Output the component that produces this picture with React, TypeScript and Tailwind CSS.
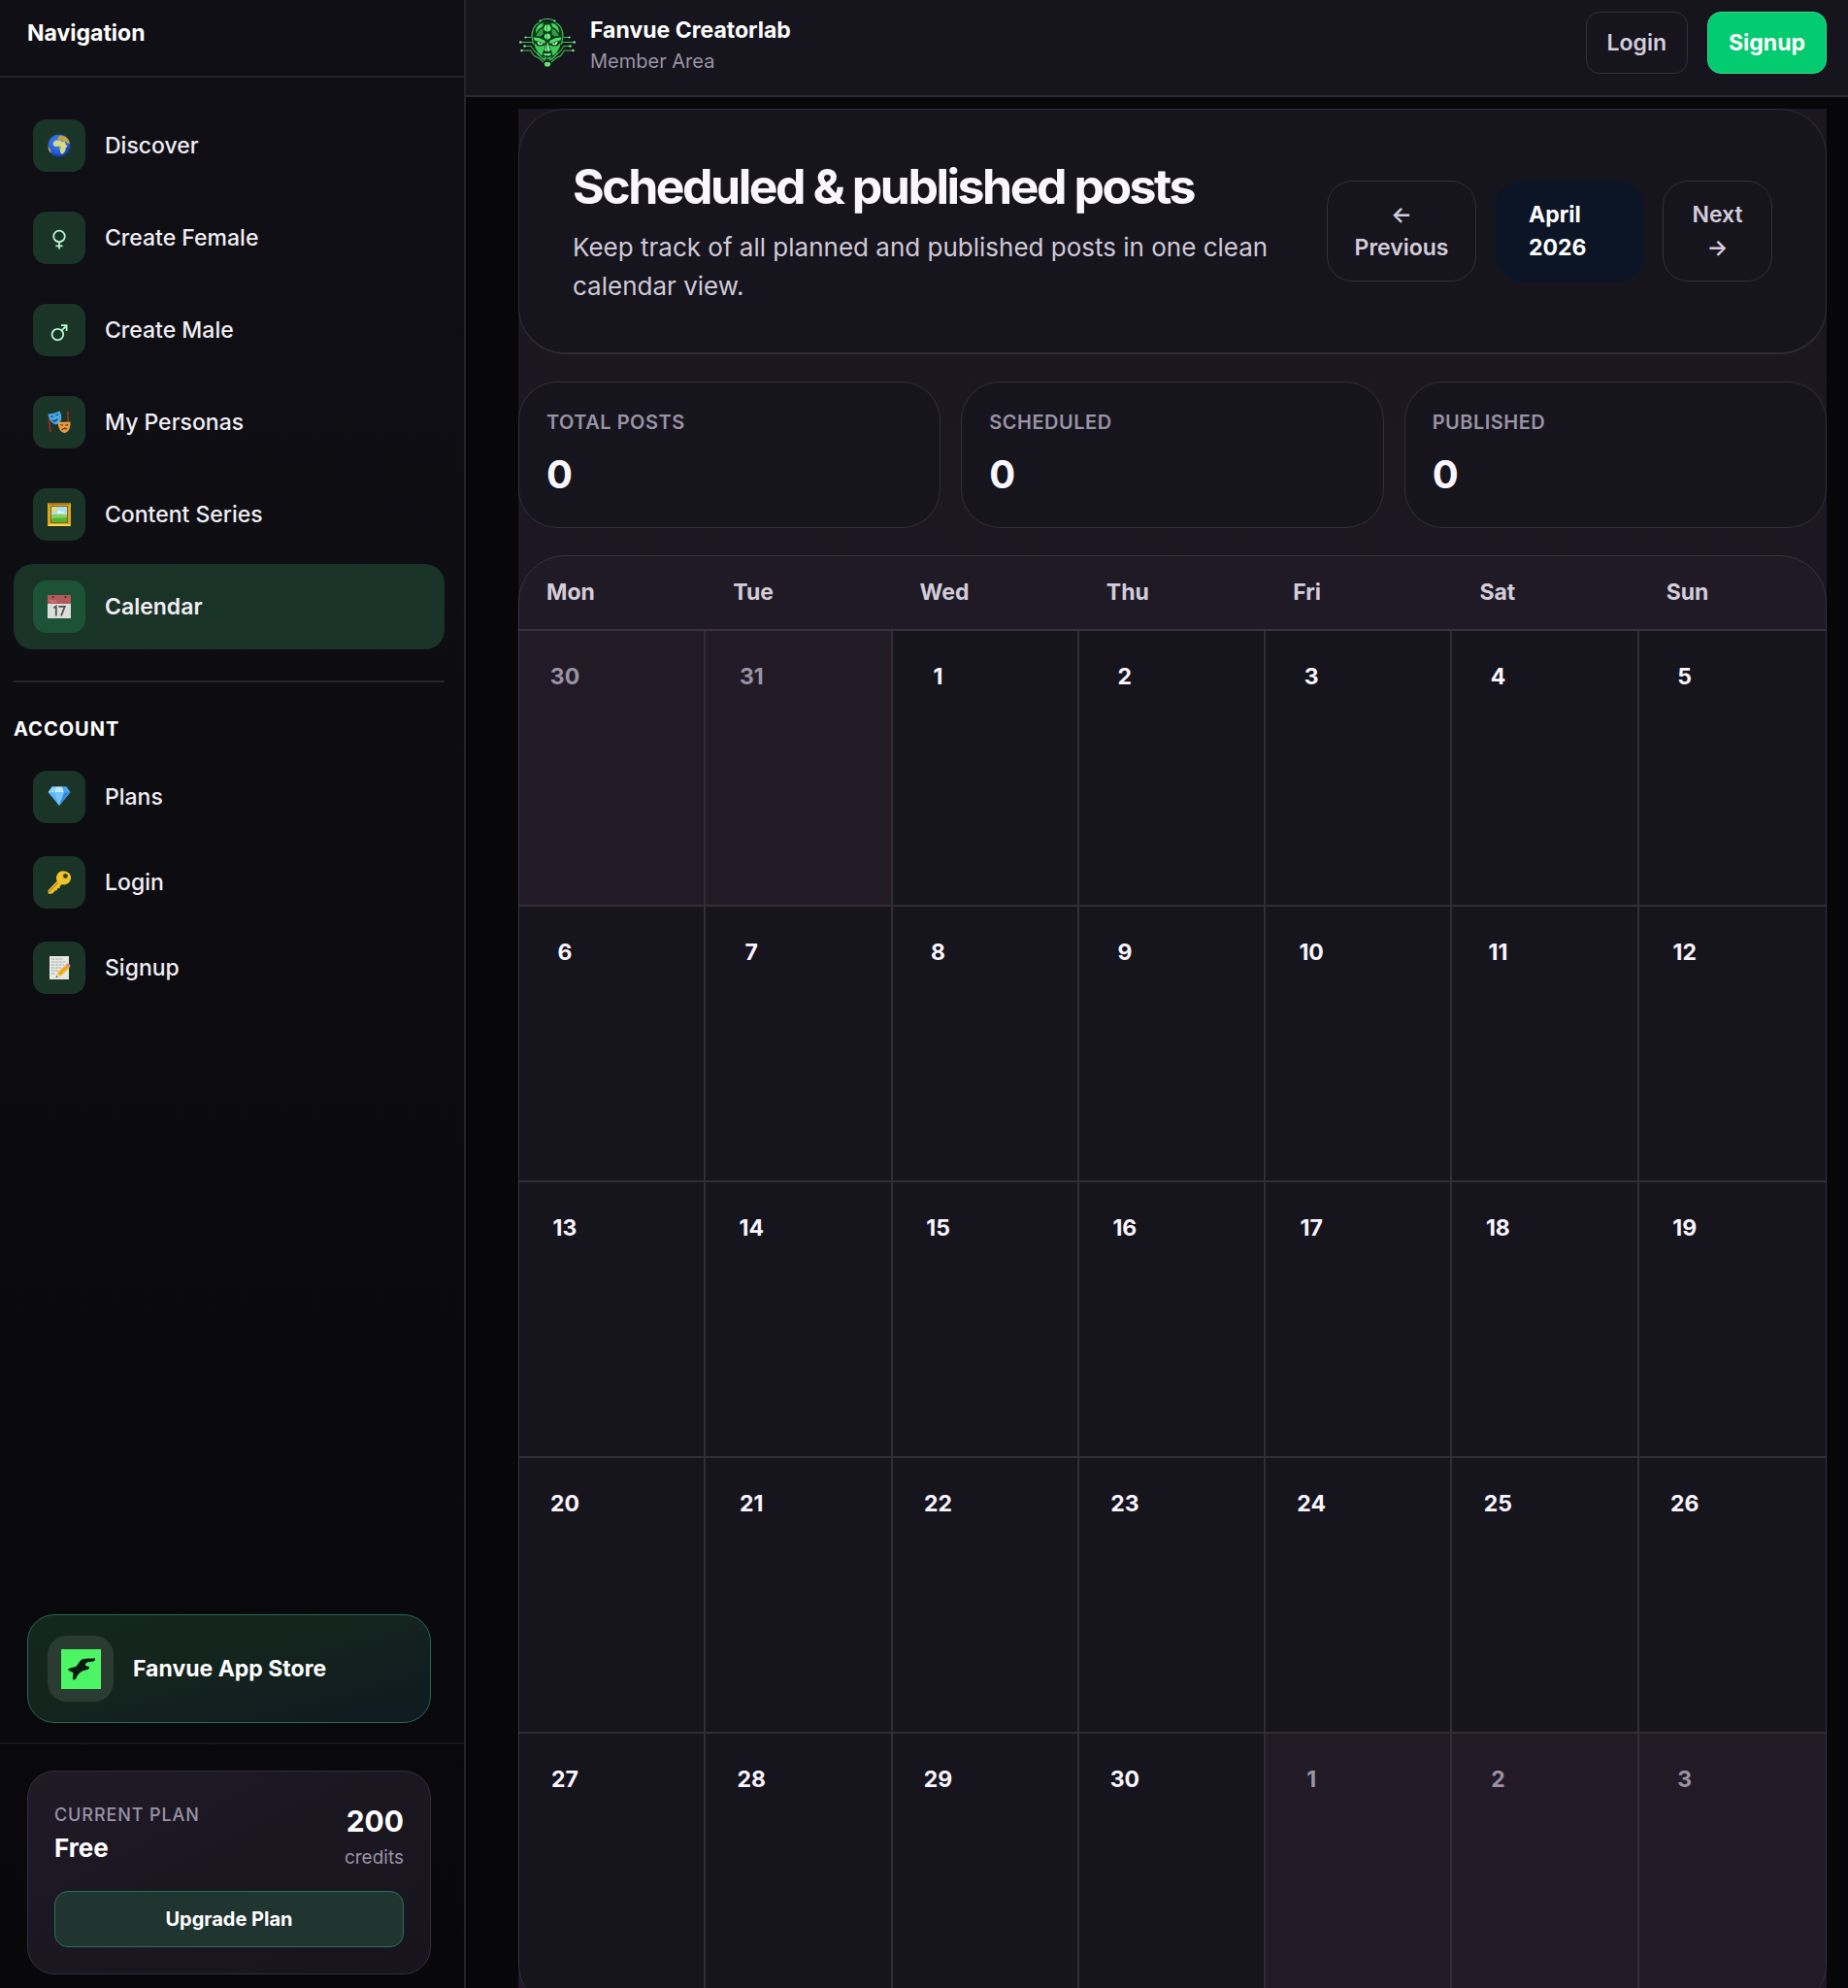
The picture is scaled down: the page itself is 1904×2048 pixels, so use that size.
import type { ReactNode } from 'react';

interface NavEntry {
  label: string;
  icon: ReactNode;
  active?: boolean;
}

const GlobeIcon = () => (
  <svg className="w-6 h-6" viewBox="0 0 24 24">
    <defs>
      <radialGradient id="sea" cx="0.4" cy="0.35" r="0.7">
        <stop offset="0" stopColor="#3f8bf0" />
        <stop offset="0.7" stopColor="#2257cf" />
        <stop offset="1" stopColor="#16348f" />
      </radialGradient>
    </defs>
    <circle cx="12" cy="12" r="11.6" fill="url(#sea)" />
    <path d="M6 8.4 9 6.4l4 .2 1.6 1.2 3.2.2 1.2 3.4 1.8.4-2 2.8-.6 3-2.6 3.2-1.8-.4-1.2-4 .2-2.4-1.4-1.2-3.6.2-2-2z" fill="#d9d98a" />
    <path d="M10.4 3.8 13 1.6l5.2.8 3.8 4 .9 3.6-2.4-.2-1.4-1.6-2.6-.6-2.8-1.4-2.4.2z" fill="#c2a53c" />
    <path d="M.6 13.2 2.4 15l1 3.2-.4 1.2C1.4 17.4.6 15.2.6 13.2z" fill="#d8b54a" />
    <path d="m10 12 3 .4 1 1.6-.2 2z" fill="#8fb95e" />
  </svg>
);

const FemaleIcon = () => (
  <svg className="w-6 h-6" viewBox="0 0 24 24" fill="none" stroke="#b9f5d2" strokeWidth="1.8">
    <circle cx="12" cy="10.4" r="5.8" />
    <path d="M12 16.2v7.4M8.4 20.4h7.2" />
  </svg>
);

const MaleIcon = () => (
  <svg className="w-6 h-6" viewBox="0 0 24 24" fill="none" stroke="#b9f5d2" strokeWidth="1.8">
    <circle cx="10.4" cy="16.6" r="5.8" />
    <path d="m14.6 12.4 5-5M14 7.2h5.6V13" />
  </svg>
);

const MasksIcon = () => (
  <svg className="w-6 h-6" viewBox="0 0 24 24">
    <path d="M1.6 9c-.8 3 1.6 5 .6 8 .6 2 .4 3.6 1.4 5" fill="none" stroke="#a32a20" strokeWidth="1.6" />
    <path d="M20.6.8c1.4 3-.8 5 .8 8l-.6 3" fill="none" stroke="#a32a20" strokeWidth="1.6" />
    <path d="M.6 3.6C4.4 3.4 8 2.2 12.6.4c2 3.6 2.4 8 .6 11.200-1 2-4 3.200-6 2.400C3.600 12.600.8 8.400.6 3.600z" fill="#4aa6e6" />
    <path d="m3.4 6.6 2.6-1M8.4 5l2.8-1.200" fill="none" stroke="#17446e" strokeWidth="1.2" />
    <path d="M4.4 9.6c2 .8 5 0 6.4-2-.2 2-1.4 3.8-3 4-1.4.2-2.8-.6-3.4-2z" fill="#17446e" />
    <path d="M10.8 11.2c3.800.8 7.600.8 12.600.2.6 4.400-.6 8.400-3.400 10.600-1.800 1.400-4.200 1.200-5.600-.2-2.400-2.200-3.800-6.200-3.600-10.600z" fill="#eb9b46" />
    <path d="m13.4 14.6 2.6.6M18.4 15.2l2.8-.6M14.8 20c1-2 3.6-2.4 5-.6" fill="none" stroke="#6b3510" strokeWidth="1.3" />
  </svg>
);

const PictureIcon = () => (
  <svg className="w-6 h-6" viewBox="0 0 24 24">
    <rect width="24" height="24" fill="#dba520" />
    <path d="M0 0h24l-2 2H2z" fill="#a97411" />
    <path d="M0 24h24l-2-2H2z" fill="#f8d84a" />
    <rect x="3" y="3" width="18" height="18" fill="#8c5d10" />
    <rect x="4" y="4" width="16" height="16" fill="#a9e1ee" />
    <circle cx="7" cy="7" r="2.2" fill="#f5dc4b" />
    <path d="M10 9.4c1-1.6 3-1.6 4-.2 1.6-.6 3 0 3.4 1.4h-8z" fill="#f4fbfd" />
    <path d="M4 12.6c4-1.8 8 .4 16-.6v8H4z" fill="#8bd05a" />
    <path d="M4 17c5-3 10 0 16-2v5H4z" fill="#4fb537" />
  </svg>
);

const CalendarIcon = () => (
  <svg className="w-6 h-6" viewBox="0 0 24 24">
    <rect width="24" height="24" fill="#dcdedb" />
    <rect width="24" height="9" fill="#b5595b" />
    <circle cx="5.6" cy="2" r="1" fill="#3d2b2b" />
    <circle cx="18.4" cy="2" r="1" fill="#3d2b2b" />
    <path d="M3 7.6V5M5 5v2.4h1.6M8 5v2.4h1.4" fill="none" stroke="#d99b9b" strokeWidth=".8" />
    <path d="m6.4 13.2 2.4-1.6v9.8M11.4 11.8h6.4l-3.8 9.6" fill="none" stroke="#4b4f4e" strokeWidth="1.7" />
  </svg>
);

const DiamondIcon = () => (
  <svg className="w-6 h-6" viewBox="0 0 24 24">
    <path d="M4.6 1.6h14.8L23.4 7.2 12 21 .6 7.2z" fill="#56b3f5" />
    <path d="M4.6 1.6.6 7.2H7l2-5.6z" fill="#8fd3fb" />
    <path d="M9 1.6h6l2 5.6H7z" fill="#bfe8ff" />
    <path d="M15 1.6h4.4l4 5.6H17z" fill="#4aa5ee" />
    <path d="M7 7.2h10L12 21z" fill="#76c6fa" />
    <path d="M17 7.2h6.4L12 21z" fill="#3789dc" />
  </svg>
);

const KeyIcon = () => (
  <svg className="w-6 h-6" viewBox="0 0 24 24">
    <path
      d="M16.600.4a7 7 0 1 1-1.800 13.600l-2 2-.4 2-2.200.2-.6 2-2 .2-.8 1.400-2.200 2H.8L.4 20.400 9.800 10.600A7 7 0 0 1 16.600.4z"
      fill="#f0c22e"
    />
    <path d="m1.4 22 9.4-9.6" stroke="#b98411" strokeWidth="1.2" />
    <circle cx="18.4" cy="5.4" r="2.4" fill="#24452f" stroke="#a97510" strokeWidth=".6" />
  </svg>
);

const MemoIcon = () => (
  <svg className="w-6 h-6" viewBox="0 0 24 24">
    <rect x="2" width="20" height="24" fill="#e6e8e4" />
    <path d="M4 3h12M4 6h15M4 9h13M4 12h10M4 15h7M4 18h4" stroke="#a3aaac" strokeWidth="1" strokeDasharray="3 .8" />
    <path d="m8.6 22 1.6-5L18.6 9l3.6 3.8-8.6 7.6z" fill="#f2b928" />
    <path d="m11.6 18.6 8.6-8" stroke="#d18f12" strokeWidth="1" />
    <path d="m18.6 9 1.8-1.4c1-.6 3.4 1.6 3 2.8l-1.2 2.4z" fill="#e58a91" />
    <path d="m8.6 22 1.6-5 3.4 3.4z" fill="#e9cfa0" />
    <path d="m8.6 22 .6-1.8 1.2 1.2z" fill="#333" />
  </svg>
);

// one half of the face, mirrored for the other side
const LogoHalf = () => (
  <>
    <path d="M29.5 3C23 2 18 4 15.5 8c-2 3-2.5 8-2 12l1.5 9 4.5 8 5 5 5 2z" fill="#0c3a1a" />
    <path d="M22 2.5c2.5-1.8 5-2 7-2" fill="none" stroke="#4fd866" strokeWidth="1" />
    <path d="M20.5 4.5c-5 2-7.5 6-7.5 14.5l1.5 8" fill="none" stroke="#3fbf55" strokeWidth="1.2" />
    <path d="M19 8c1.5-2 3.5-3 6-3l-1 3.5-4 2.5-3 4c0-3 .5-5 2-7z" fill="#4bd462" />
    <path d="M20.5 12.5 24.5 10v6.5l-3.5 2-4-.5z" fill="#2f9e45" />
    <path d="M29 6.5h-2L25.5 9v3l3.5 2z" fill="#66f07c" />
    <path d="m29 15-3 2v3l3 2z" fill="#6df584" />
    <path d="M14.5 19.5 20 20l6 2.5 1 2-1 1.5-6-2.5-4.5-1z" fill="#52e06a" />
    <path d="m18 23.5 6.5 2.2-1.5 1.5h-3z" fill="#baffc6" />
    <path d="m20.5 24.5 2 .8-.8 1.2z" fill="#072511" />
    <path d="m15.5 25 3.5 3.5h5l3-1.5-1 4.5-1.5 2.5-1 4.5-4-3.5-3-5z" fill="#3ecb57" />
    <path d="M29 23.500l-1.500 5-1.500 4.500 2 1 1-.5z" fill="#7df590" />
    <path d="M29 36.200c-1.500-.5-2.500 0-4.500.6l2.500 1.500 2 .2z" fill="#7dff90" />
    <path d="m24.5 39 4.500 1.500V42l-3-.5z" fill="#38b850" />
    <path d="M29 45h-2l-1.500 1.800 1.500 2.700h2z" fill="#5ee975" />
    <path
      d="M7 19.5h5M1.500 24.500h12M6 28.500h6l3.500 5 5 4.500M3 33h8.500l4 5.500 5 2.500 4.500 4"
      fill="none"
      stroke="#3cc254"
      strokeWidth="1.1"
    />
    <path d="m18.5 36 5.5 5.5 3 1.5" fill="none" stroke="#3cc254" strokeWidth="1.4" />
    <g fill="#7bf58d">
      <circle cx="6.5" cy="19.5" r="1.1" />
      <circle cx="1.3" cy="24.5" r="1.3" />
      <circle cx="5.5" cy="28.5" r="1.2" />
      <circle cx="2.5" cy="33" r="1.2" />
      <circle cx="21.5" cy="2.6" r="1.1" />
    </g>
  </>
);

const Logo = () => (
  <svg className="w-[60px] h-[50px] shrink-0" viewBox="-1 0 60 50">
    <LogoHalf />
    <g transform="matrix(-1 0 0 1 58 0)">
      <LogoHalf />
    </g>
  </svg>
);

const FanvueMark = () => (
  <svg className="w-[41px] h-[41px]" viewBox="0 0 41 41">
    <rect width="41" height="41" fill="#4cf564" />
    <path
      d="M7 20.500c2.500-1.500 5.500-1.500 8-2.500 2.500-1.500 3.500-6.500 7.500-8 4-.6 8.500-.4 12.500-.8.300 2-.8 3.600-3 3.600-3.500.2-6 .4-7 2.400-.6 1.400.8 2.400 3 2.600 1.200.2 1.600 2 .2 2.600-2.600 1-6 1.200-8 3-2.400 1.600-3.600 3.400-4.600 6.200-.6 1.800-2.800 2.600-3.600 1.200-.6-2 .8-4.600.4-6.400C11.400 22.800 7.400 22.600 7 20.500z"
      fill="#0a1a10"
    />
  </svg>
);

const mainNav: NavEntry[] = [
  { label: 'Discover', icon: <GlobeIcon /> },
  { label: 'Create Female', icon: <FemaleIcon /> },
  { label: 'Create Male', icon: <MaleIcon /> },
  { label: 'My Personas', icon: <MasksIcon /> },
  { label: 'Content Series', icon: <PictureIcon /> },
  { label: 'Calendar', icon: <CalendarIcon />, active: true },
];

const accountNav: NavEntry[] = [
  { label: 'Plans', icon: <DiamondIcon /> },
  { label: 'Login', icon: <KeyIcon /> },
  { label: 'Signup', icon: <MemoIcon /> },
];

const stats = [
  { label: 'Total posts', value: 0 },
  { label: 'Scheduled', value: 0 },
  { label: 'Published', value: 0 },
];

const weekdays = ['Mon', 'Tue', 'Wed', 'Thu', 'Fri', 'Sat', 'Sun'];

// April 2026 starts on a Wednesday, so the grid opens with two March days
const LEADING_DAYS = 2;
const DAYS_IN_MONTH = 30;
const DAYS_IN_PREVIOUS = 31;

const weeks = Array.from({ length: 5 }, (_, week) =>
  Array.from({ length: 7 }, (_, weekday) => {
    const day = week * 7 + weekday - LEADING_DAYS + 1;
    if (day < 1) return { day: DAYS_IN_PREVIOUS + day, outside: true };
    if (day > DAYS_IN_MONTH) return { day: day - DAYS_IN_MONTH, outside: true };
    return { day, outside: false };
  })
);

function NavLink({ label, icon, active }: NavEntry) {
  return (
    <a
      href="#"
      aria-current={active ? 'page' : undefined}
      className={`flex items-center gap-5 h-[88px] px-5 rounded-[20px] text-[23px] text-[#f1eef5] ${
        active ? 'bg-[#193327] font-semibold' : 'font-medium'
      }`}
    >
      <span
        className={`flex items-center justify-center w-[54px] h-[54px] rounded-[14px] ${
          active ? 'bg-[#1c5337]' : 'bg-[#1a3428]'
        }`}
      >
        {icon}
      </span>
      {label}
    </a>
  );
}

function Sidebar() {
  return (
    <aside className="flex flex-col w-[480px] shrink-0 h-full border-r-2 border-[#25242a] bg-linear-to-b from-[#100f15] to-[#08080b]">
      <div className="h-20 shrink-0 px-7 pt-4 border-b-2 border-[#25242a]">
        <h2 className="text-[23px] leading-9 font-bold">Navigation</h2>
      </div>

      <nav className="flex-1 pt-[26px] pl-[14px] pr-5">
        <div className="flex flex-col gap-[7px]">
          {mainNav.map((item) => (
            <NavLink key={item.label} {...item} />
          ))}
        </div>
        <div className="mt-8 border-t-2 border-[#25242a] pt-[34px]">
          <h3 className="text-xl leading-7 font-bold tracking-wider uppercase">Account</h3>
          <div className="flex flex-col mt-3">
            {accountNav.map((item) => (
              <NavLink key={item.label} {...item} />
            ))}
          </div>
        </div>
      </nav>

      <div className="pl-7 pr-[34px] pb-5">
        <a
          href="#"
          className="flex items-center gap-5 h-28 px-5 rounded-[28px] border border-[#1f6b4c] bg-linear-to-br from-[#14281e] via-[#13231d] to-[#0f1a22] text-[23px] font-bold"
        >
          <span className="flex items-center justify-center w-[68px] h-[68px] rounded-[20px] bg-[#2a3b32]">
            <FanvueMark />
          </span>
          Fanvue App Store
        </a>
      </div>

      <div className="border-t-2 border-[#17161b] pt-[27px] pl-7 pr-[34px] pb-[14px]">
        <div className="px-[27px] pt-[29px] pb-[27px] rounded-[28px] border border-[#322f39] bg-linear-to-br from-[#1f1a26] to-[#17141d]">
          <div className="flex justify-between">
            <div>
              <p className="text-lg leading-8 font-medium tracking-wider uppercase text-[#9a93a5]">Current Plan</p>
              <p className="text-[26px] leading-9 font-bold">Free</p>
            </div>
            <div className="text-right">
              <p className="text-[30px] leading-[44px] font-bold">200</p>
              <p className="text-[19px] leading-8 text-[#9a93a5]">credits</p>
            </div>
          </div>
          <button className="w-full h-[58px] mt-[18px] rounded-[14px] border border-[#27744f] bg-[#213530] text-xl font-bold">
            Upgrade Plan
          </button>
        </div>
      </div>
    </aside>
  );
}

function TopBar() {
  return (
    <header className="flex items-start justify-between h-[100px] shrink-0 pl-[54px] pr-[22px] pt-3 border-b-2 border-[#2a2830] bg-[#16141d]">
      <div className="flex items-center gap-[14px]">
        <Logo />
        <div>
          <p className="text-[23px] leading-[38px] font-bold">Fanvue Creatorlab</p>
          <p className="text-xl leading-[26px] text-[#9a93a5]">Member Area</p>
        </div>
      </div>
      <div className="flex gap-5">
        <button className="h-16 px-[21px] rounded-[14px] border border-[#322f39] text-[23px] font-semibold text-[#d3cddb]">Login</button>
        <button className="h-16 px-[21px] rounded-[14px] border border-[#3ad489] bg-[#02cb70] text-[23px] font-bold text-white">
          Signup
        </button>
      </div>
    </header>
  );
}

function Hero() {
  return (
    <section className="flex items-center justify-between gap-10 px-[55px] py-12 rounded-[48px] border border-b-2 border-[#2e2c35] bg-[#16141c]">
      <div>
        <h1 className="text-[50px] leading-[62px] font-bold tracking-tighter text-[#faf6ff]">Scheduled &amp; published posts</h1>
        <p className="mt-3 text-[26px] leading-10 text-[#d0cad8]">
          Keep track of all planned and published posts in one clean calendar view.
        </p>
      </div>
      <div className="flex gap-5 shrink-0 text-[23px] leading-[34px]">
        <button className="w-[154px] h-[104px] px-6 rounded-[26px] border border-[#322f39] font-semibold text-[#d3cddb]">
          ← Previous
        </button>
        <div className="flex items-center w-[152px] h-[104px] px-[34px] rounded-[26px] bg-[#0c1526] font-bold">
          April 2026
        </div>
        <button className="w-[113px] h-[104px] px-6 rounded-[26px] border border-[#322f39] font-semibold text-[#d3cddb]">
          Next →
        </button>
      </div>
    </section>
  );
}

function CalendarGrid() {
  return (
    <section className="rounded-[48px] border border-[#37333e] bg-[#1f1a26] overflow-hidden">
      <table className="w-full table-fixed border-separate border-spacing-0">
        <thead>
          <tr>
            {weekdays.map((name) => (
              <th
                key={name}
                scope="col"
                className="h-[77px] px-7 border-b-2 border-[#37333e] text-left text-[23px] font-bold text-[#d3cddb]"
              >
                {name}
              </th>
            ))}
          </tr>
        </thead>
        <tbody>
          {weeks.map((week, index) => (
            <tr key={index}>
              {week.map(({ day, outside }) => (
                <td
                  key={day}
                  className={`h-[284px] p-7 align-top border-r-2 border-b-2 border-[#302d37] last:border-r-0 text-[23px] font-bold ${
                    outside ? 'bg-[#221b27] text-[#9a93a5]' : 'bg-[#16141d] text-[#faf6ff]'
                  }`}
                >
                  <span className="flex items-center justify-center w-[38px] h-[38px]">{day}</span>
                </td>
              ))}
            </tr>
          ))}
        </tbody>
      </table>
    </section>
  );
}

export default function App() {
  return (
    <div className="flex h-screen bg-[#070709] font-['Inter','Liberation_Sans',sans-serif] text-white">
      <Sidebar />
      <div className="flex flex-col flex-1 min-w-0">
        <TopBar />
        <main className="flex-1 min-h-0 pt-3 pl-[54px] pr-[22px] overflow-y-auto [scrollbar-width:none]">
          <div className="flex flex-col gap-7 bg-linear-to-b from-[#1b1721] to-[#1f1825]">
            <Hero />
            <section className="grid grid-cols-3 gap-[21px]">
              {stats.map((stat) => (
                <div key={stat.label} className="px-7 pt-[23px] pb-7 rounded-[40px] border border-[#322f39] bg-[#16141d]">
                  <p className="text-xl leading-9 font-semibold tracking-wide uppercase text-[#9a93a5]">{stat.label}</p>
                  <p className="mt-[10px] text-[40px] leading-[52px] font-bold text-[#faf6ff]">{stat.value}</p>
                </div>
              ))}
            </section>
            <CalendarGrid />
          </div>
        </main>
      </div>
    </div>
  );
}
